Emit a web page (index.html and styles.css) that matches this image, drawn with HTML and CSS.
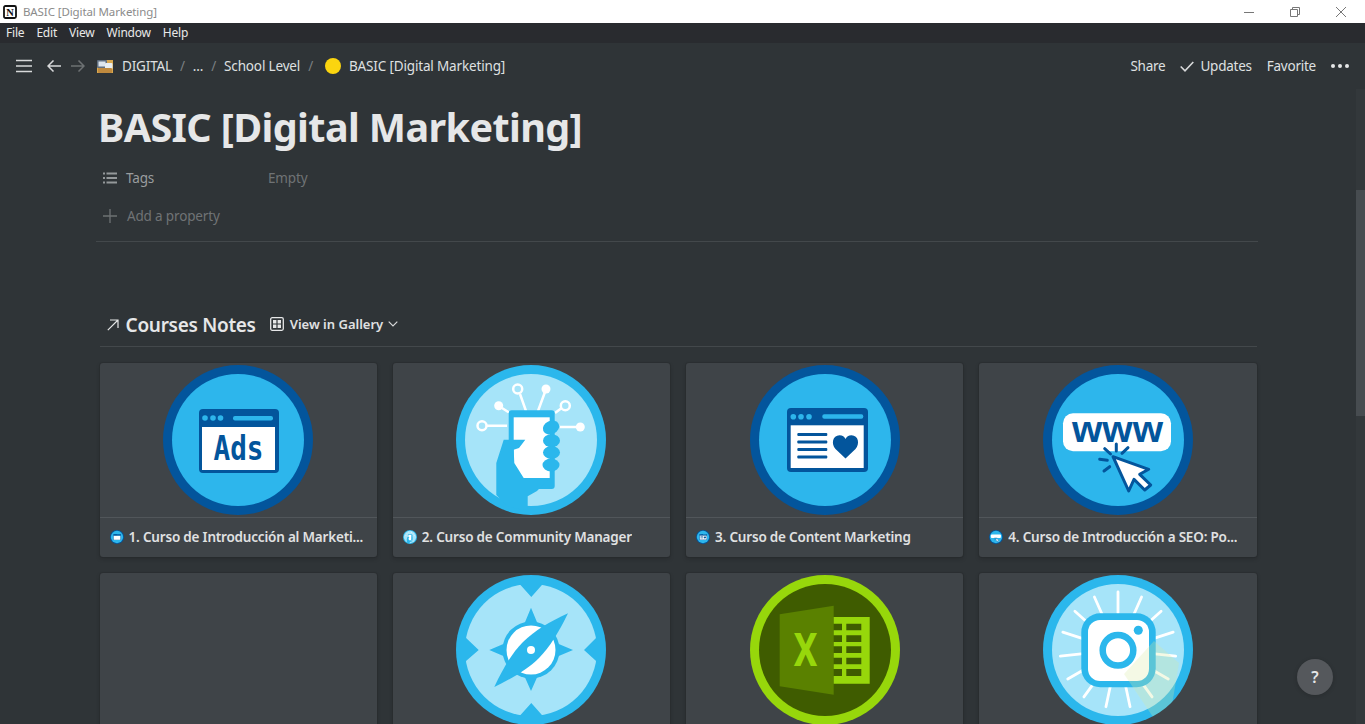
FILE: index.html
```html
<!DOCTYPE html>
<html lang="en">
<head>
<meta charset="utf-8">
<title>BASIC [Digital Marketing]</title>
<link rel="stylesheet" href="styles.css">
</head>
<body>
<svg class="defs" aria-hidden="true">
  <symbol id="ic-ads" viewBox="0 0 150 150">
    <circle cx="75" cy="75" r="75" fill="#03559c"/>
    <circle cx="75" cy="75" r="66" fill="#2db6ec"/>
    <rect x="36" y="44" width="80" height="64" rx="4" fill="#03559c"/>
    <rect x="39" y="62" width="73" height="43" fill="#fff"/>
    <circle cx="42" cy="53" r="2.8" fill="#2db6ec"/><circle cx="50" cy="53" r="2.8" fill="#2db6ec"/><circle cx="57.5" cy="53" r="2.8" fill="#2db6ec"/>
    <rect x="70" y="51" width="40" height="4.5" rx="2" fill="#2db6ec"/>
  </symbol>
  <symbol id="ic-community" viewBox="0 0 150 150">
    <defs><clipPath id="cc"><circle cx="75" cy="75" r="70"/></clipPath></defs>
    <circle cx="75" cy="75" r="75" fill="#2bb7ec"/>
    <circle cx="75" cy="75" r="66" fill="#a6e4f9"/>
    <g stroke="#fff" stroke-width="2.5" fill="none">
      <path d="M31 60.7H51M46 43L53 47.5M64 29L70 46M89 27L82 46M105 43.500L99 48M104 62H120"/>
      <circle cx="26" cy="60.700" r="4.500"/><circle cx="61.700" cy="24" r="4.500"/><circle cx="109.300" cy="40.700" r="4.500"/>
    </g>
    <g fill="#fff"><circle cx="42.700" cy="40.700" r="4.500"/><circle cx="90" cy="24" r="4.500"/><circle cx="124.300" cy="62" r="4.500"/></g>
    <rect x="52.700" y="45.300" width="46" height="78.700" rx="3" fill="#2bb7ec"/>
    <rect x="57.700" y="52.300" width="36" height="60.700" fill="#fff"/>
    <circle cx="75.300" cy="118.700" r="2.200" fill="#fff"/>
    <path clip-path="url(#cc)" d="M47.700 74.700H69.300L63 83L57.700 84.700L58.300 98L67.700 113H93.700L81 126L71.700 131.300V150H60L40.300 130V98Z" fill="#2bb7ec"/>
    <g fill="#2bb7ec"><ellipse cx="95" cy="62.500" rx="8.500" ry="6.500" transform="rotate(-25 95 62.500)"/><ellipse cx="95.500" cy="75.700" rx="8.500" ry="6.500"/><ellipse cx="95.500" cy="87.500" rx="8.500" ry="6.500"/><ellipse cx="95" cy="100" rx="8.500" ry="6.500"/></g>
  </symbol>
  <symbol id="ic-content" viewBox="0 0 150 150">
    <circle cx="75" cy="75" r="75" fill="#03559c"/>
    <circle cx="75" cy="75" r="66" fill="#2db6ec"/>
    <rect x="37" y="43" width="81" height="64" rx="4" fill="#03559c"/>
    <rect x="40.700" y="60.300" width="73" height="42.700" fill="#fff"/>
    <circle cx="43.300" cy="51.700" r="2.800" fill="#2db6ec"/><circle cx="51" cy="51.700" r="2.800" fill="#2db6ec"/><circle cx="59" cy="51.700" r="2.800" fill="#2db6ec"/>
    <rect x="72.300" y="49.300" width="41" height="4.500" rx="2" fill="#2db6ec"/>
    <g fill="#03559c"><rect x="47.300" y="68" width="30" height="3" rx="1"/><rect x="47.300" y="75.500" width="30" height="3" rx="1"/><rect x="47.300" y="83" width="30" height="3" rx="1"/><rect x="47.300" y="90.500" width="30" height="3" rx="1"/>
    <path d="M95.500 93.500L85.500 84C81 79 82.500 70.500 89.500 70.300C92.500 70.300 94.500 71.800 95.500 74C96.500 71.800 98.500 70.300 101.500 70.300C108.500 70.500 110 79 105.500 84Z"/></g>
  </symbol>
  <symbol id="ic-seo" viewBox="0 0 150 150">
    <circle cx="75" cy="75" r="75" fill="#03559c"/>
    <circle cx="75" cy="75" r="66" fill="#2db6ec"/>
    <rect x="20" y="48.300" width="108" height="38" rx="10" fill="#fff"/>
    <path d="M73.300 79V86M61.700 83.700L67.500 89M85 82.700L79 88.300M56.700 94.300L64.300 95.300M61 106L66.700 101.700" stroke="#03559c" stroke-width="3" stroke-linecap="round" fill="none"/>
    <path d="M70 91.700L85.700 126L91 114.300L101.700 125L107.700 120L96.700 109.300L105.700 104.300Z" fill="#fff" stroke="#03559c" stroke-width="3" stroke-linejoin="round"/>
  </symbol>
  <symbol id="ic-compass" viewBox="0 0 150 150">
    <circle cx="75" cy="75" r="75" fill="#2bb7ec"/>
    <circle cx="75" cy="75" r="66" fill="#a6e4f9"/>
    <path d="M62.700 8L75.300 22L87.700 8ZM8 61L22.700 75L8 87.700ZM142 61L128 75L142 87.700ZM62.700 142L75.300 128L87.700 142Z" fill="#2bb7ec"/>
    <path d="M75 32.700L83 52H67ZM117 75L98 83V67ZM75 116L67 98H83ZM33.300 75L52 67V83Z" fill="#2bb7ec"/>
    <circle cx="75" cy="75" r="28.500" fill="#2bb7ec"/>
    <circle cx="75" cy="75" r="24.500" fill="#fff"/>
    <path d="M112 38.300C95 46 78 56 67 67C56 78 46 95 38.300 112C55 104 72 94 83 83C94 72 104 55 112 38.300Z" fill="#2bb7ec"/>
    <circle cx="75" cy="75" r="4" fill="#fff"/>
  </symbol>
  <symbol id="ic-excel" viewBox="0 0 150 150">
    <circle cx="75" cy="75" r="75" fill="#97d70b"/>
    <circle cx="75" cy="75" r="66" fill="#3f5c00"/>
    <path d="M29.700 39.300L83.700 30.700V119.700L29.700 111.300Z" fill="#5a8100"/>
    <path d="M83.700 42H119.700V108.700H83.700ZM83.700 48.700V55.300H92V48.700ZM96.300 48.700V55.300H111.300V48.700ZM83.700 60.300V67H92V60.300ZM96.300 60.300V67H111.300V60.300ZM83.700 71.300V78H92V71.300ZM96.300 71.300V78H111.300V71.300ZM83.700 82.700V89.300H92V82.700ZM96.300 82.700V89.300H111.300V82.700ZM83.700 94V101H92V94ZM96.300 94V101H111.300V94Z" fill="#97d70b" fill-rule="evenodd"/>
  </symbol>
  <symbol id="ic-insta" viewBox="0 0 150 150">
    <defs><clipPath id="ci"><circle cx="75" cy="75" r="75"/></clipPath></defs>
    <circle cx="75" cy="75" r="75" fill="#2bb7ec"/>
    <circle cx="75" cy="75" r="66" fill="#a6e4f9"/>
    <g stroke="#fff" stroke-width="2.800" stroke-linecap="round">
      <path d="M75 17V38"/><path d="M75 17V38" transform="rotate(24 75 75)"/><path d="M75 17V38" transform="rotate(48 75 75)"/><path d="M75 17V38" transform="rotate(72 75 75)"/><path d="M75 17V38" transform="rotate(96 75 75)"/><path d="M75 17V38" transform="rotate(120 75 75)"/><path d="M75 17V38" transform="rotate(144 75 75)"/><path d="M75 17V38" transform="rotate(168 75 75)"/><path d="M75 17V38" transform="rotate(192 75 75)"/><path d="M75 17V38" transform="rotate(216 75 75)"/><path d="M75 17V38" transform="rotate(240 75 75)"/><path d="M75 17V38" transform="rotate(264 75 75)"/><path d="M75 17V38" transform="rotate(288 75 75)"/><path d="M75 17V38" transform="rotate(312 75 75)"/><path d="M75 17V38" transform="rotate(336 75 75)"/>
    </g>
    <rect x="38.300" y="38.300" width="74.400" height="74" rx="19" fill="#2bb7ec"/>
    <rect x="45" y="45" width="61" height="61" rx="12" fill="#fff"/>
    <circle cx="75" cy="75.300" r="15.300" fill="#fff" stroke="#2bb7ec" stroke-width="6.500"/>
    <circle cx="95.300" cy="55.300" r="4.500" fill="#2bb7ec"/>
    <path clip-path="url(#ci)" d="M81 99L111 66L136 88L128 136L112 145Z" fill="#d9e8a0" fill-opacity=".28"/>
  </symbol>
</svg>

<div class="app">
  <header class="titlebar">
    <svg class="app-logo" viewBox="0 0 14 14"><rect x="1" y="1" width="12" height="12" rx="1.500" fill="#fff" stroke="#111" stroke-width="1.800"/><text x="7" y="11" text-anchor="middle" font-family="Liberation Serif" font-weight="700" font-size="10.500" fill="#111">N</text></svg>
    <span class="titlebar-text">BASIC [Digital Marketing]</span>
    <div class="win-controls">
      <svg class="win-btn" viewBox="0 0 10 10"><path d="M0 5.500H10" stroke="#777" fill="none"/></svg>
      <svg class="win-btn" viewBox="0 0 10 10"><path d="M.5 2.500H7.500V9.500H.5ZM2.500 2.500V.5H9.500V7.500H7.500" stroke="#777" fill="none"/></svg>
      <svg class="win-btn" viewBox="0 0 10 10"><path d="M0 0L10 10M10 0L0 10" stroke="#777" fill="none"/></svg>
    </div>
  </header>

  <nav class="menubar">
    <span>File</span><span>Edit</span><span>View</span><span>Window</span><span>Help</span>
  </nav>

  <div class="topbar">
    <svg class="tb-menu" viewBox="0 0 16 14"><path d="M0 1.500H16M0 7H16M0 12.500H16" stroke="#d8d9da" stroke-width="1.700" fill="none"/></svg>
    <svg class="tb-arrow" viewBox="0 0 14 12"><path d="M14 6H1M6.500 .5L1 6L6.500 11.500" stroke="#d8d9da" stroke-width="1.500" fill="none"/></svg>
    <svg class="tb-arrow dim" viewBox="0 0 14 12"><path d="M0 6H13M7.500 .5L13 6L7.500 11.500" stroke="#6d7173" stroke-width="1.500" fill="none"/></svg>
    <svg class="crumb-img" viewBox="0 0 18 16"><path d="M1 4H7L8 2H17V15H1Z" fill="#d8a850"/><rect x="1" y="2" width="10" height="8" rx="1" fill="#5f6e80"/><rect x="2.500" y="3.500" width="7" height="5" fill="#dde6ee"/><rect x="9" y="5" width="7.500" height="6" rx="1" fill="#e8eef2"/><rect x="2" y="10" width="14" height="5" rx="1" fill="#c08a3e"/></svg>
    <span class="crumb first">DIGITAL</span>
    <span class="slash">/</span>
    <span class="crumb">...</span>
    <span class="slash">/</span>
    <span class="crumb">School Level</span>
    <span class="slash">/</span>
    <span class="dot"></span>
    <span class="crumb">BASIC [Digital Marketing]</span>
    <div class="tb-actions">
      <span>Share</span>
      <span class="tb-updates"><svg class="tb-check" viewBox="0 0 14 11"><path d="M.7 5.500L5 9.800L13.300 1" stroke="#d8d9da" stroke-width="1.600" fill="none"/></svg>Updates</span>
      <span>Favorite</span>
      <svg class="tb-more" viewBox="0 0 18 4"><circle cx="2" cy="2" r="2" fill="#e6e7e8"/><circle cx="9" cy="2" r="2" fill="#e6e7e8"/><circle cx="16" cy="2" r="2" fill="#e6e7e8"/></svg>
    </div>
  </div>

  <main class="main">
    <div class="page">
      <h1 class="page-title">BASIC [Digital Marketing]</h1>
      <div class="prop">
        <svg class="prop-icon" viewBox="0 0 14 12"><path d="M3.500 1.500H14M3.500 6H14M3.500 10.500H14M0 1.500H2M0 6H2M0 10.500H2" stroke="#94989a" stroke-width="1.800" fill="none"/></svg>
        <span class="prop-name">Tags</span>
        <span class="prop-value">Empty</span>
      </div>
      <div class="prop add">
        <svg class="prop-icon" viewBox="0 0 14 14"><path d="M7 0V14M0 7H14" stroke="#6d7173" stroke-width="1.300" fill="none"/></svg>
        <span class="add-label">Add a property</span>
      </div>
      <section class="section">
        <div class="section-head">
          <svg class="link-arrow" viewBox="0 0 12 12"><path d="M.8 11.200L11 1M3 1H11V9" stroke="#e6e7e8" stroke-width="1.200" fill="none"/></svg>
          <h2 class="section-title">Courses Notes</h2>
          <svg class="view-icon" viewBox="0 0 14 14"><rect x=".7" y=".7" width="12.600" height="12.600" rx="1.500" fill="none" stroke="#e6e7e8" stroke-width="1.300"/><path d="M3 3H6.400V6.400H3ZM7.600 3H11V6.400H7.600ZM3 7.600H6.400V11H3ZM7.600 7.600H11V11H7.600Z" fill="#e6e7e8"/></svg>
          <span class="view-name">View in Gallery</span>
          <svg class="chev" viewBox="0 0 10 6"><path d="M.7 .7L5 5L9.300 .7" stroke="#d8d9da" stroke-width="1.200" fill="none"/></svg>
        </div>
        <div class="gallery">
          <article class="card">
            <div class="cover"><svg class="cover-img" viewBox="0 0 150 150"><use href="#ic-ads" width="150" height="150"/><text x="75.500" y="95" text-anchor="middle" font-family="DejaVu Sans Mono" font-weight="700" font-size="33" textLength="50" lengthAdjust="spacingAndGlyphs" fill="#03559c">Ads</text></svg></div>
            <div class="caption"><svg class="cap-icon"><use href="#ic-ads"/></svg><span class="cap-text">1. Curso de Introducción al Marketi...</span></div>
          </article>
          <article class="card">
            <div class="cover"><svg class="cover-img"><use href="#ic-community"/></svg></div>
            <div class="caption"><svg class="cap-icon"><use href="#ic-community"/></svg><span class="cap-text">2. Curso de Community Manager</span></div>
          </article>
          <article class="card">
            <div class="cover"><svg class="cover-img"><use href="#ic-content"/></svg></div>
            <div class="caption"><svg class="cap-icon"><use href="#ic-content"/></svg><span class="cap-text">3. Curso de Content Marketing</span></div>
          </article>
          <article class="card">
            <div class="cover"><svg class="cover-img" viewBox="0 0 150 150"><use href="#ic-seo" width="150" height="150"/><text x="74.500" y="77" text-anchor="middle" font-family="Liberation Sans" font-weight="700" font-size="36" textLength="91" lengthAdjust="spacingAndGlyphs" fill="#03559c">www</text></svg></div>
            <div class="caption"><svg class="cap-icon"><use href="#ic-seo"/></svg><span class="cap-text">4. Curso de Introducción a SEO: Po...</span></div>
          </article>
          <article class="card">
            <div class="cover"></div>
          </article>
          <article class="card">
            <div class="cover"><svg class="cover-img"><use href="#ic-compass"/></svg></div>
          </article>
          <article class="card">
            <div class="cover"><svg class="cover-img" viewBox="0 0 150 150"><use href="#ic-excel" width="150" height="150"/><text x="55.500" y="91" text-anchor="middle" font-family="Roboto" font-weight="700" font-size="46" textLength="24" lengthAdjust="spacingAndGlyphs" fill="#97d70b">X</text></svg></div>
          </article>
          <article class="card">
            <div class="cover"><svg class="cover-img"><use href="#ic-insta"/></svg></div>
          </article>
        </div>
      </section>
    </div>
    <div class="scrollbar"><div class="scroll-thumb"></div></div>
    <button class="help" type="button">?</button>
  </main>
</div>
</body>
</html>
```

FILE: styles.css
```css
* { box-sizing: border-box; }
html, body { margin: 0; height: 100%; overflow: hidden; }
body { font-family: "Noto Sans", "Open Sans", sans-serif; background: #2f3437; color: #e6e7e8; }
.defs { position: absolute; width: 0; height: 0; }
.app { display: flex; flex-direction: column; height: 100vh; }

.titlebar { flex: 0 0 23px; background: #fff; display: flex; align-items: center; padding-left: 3px; }
.app-logo { width: 14px; height: 14px; }
.titlebar-text { margin-left: 6px; font-size: 11.500px; letter-spacing: -.1px; color: #8b8b8b; }
.win-controls { margin-left: auto; display: flex; gap: 36px; padding-right: 19px; }
.win-btn { width: 10px; height: 10px; display: block; }

.menubar { flex: 0 0 20px; background: #292b2f; display: flex; align-items: center; gap: 12px; padding: 0 0 1px 6px; font-size: 12px; letter-spacing: -.2px; color: #e8e8e8; }

.topbar { flex: 0 0 46px; display: flex; align-items: center; padding: 0 0 0 16px; font-size: 13.500px; letter-spacing: -.16px; color: #dfe0e1; }
.tb-menu { width: 16px; height: 14px; }
.tb-arrow { width: 14px; height: 12px; margin-left: 15px; }
.tb-arrow.dim { margin-left: 10px; }
.crumb-img { width: 18px; height: 16px; margin-left: 11px; }
.crumb.first { margin-left: 8px; }
.slash { margin: 0 8px; color: #7b7f82; }
.dot { width: 16px; height: 16px; border-radius: 50%; background: #fbd50f; margin: 0 8px 0 4px; }
.tb-actions { margin-left: auto; display: flex; align-items: center; gap: 15px; padding-right: 16px; letter-spacing: -.24px; }
.tb-updates { display: flex; align-items: center; gap: 6px; }
.tb-check { width: 14px; height: 11px; }
.tb-more { width: 18px; height: 4px; }

.main { flex: 1; min-height: 0; position: relative; overflow: hidden; }
.page { margin: 0 107px 0 96px; padding-top: 14px; }
.page-title { margin: 0 0 12px 2px; font-size: 39.500px; letter-spacing: -.6px; line-height: 48px; font-weight: 700; color: #e6e7e8; }
.prop { display: flex; align-items: center; height: 30px; margin-bottom: 8px; padding-left: 7px; font-size: 13.500px; letter-spacing: -.16px; }
.prop.add { margin-bottom: 10px; }
.prop-icon { width: 14px; height: 14px; flex: none; }
.prop-name { margin-left: 9px; width: 142px; color: #9a9d9f; }
.prop-value { color: #6f7375; }
.add-label { margin-left: 10px; color: #6f7375; }
.section { border-top: 1px solid #43484b; padding: 71px 1.400px 0 3.600px; }
.section-head { display: flex; align-items: center; height: 24px; padding-left: 7px; }
.link-arrow { width: 12px; height: 12px; flex: none; }
.section-title { margin: 0 0 0 7px; font-size: 19px; letter-spacing: -.3px; line-height: 24px; font-weight: 600; color: #e6e7e8; }
.view-icon { width: 14px; height: 14px; margin: 0 0 2px 14px; }
.view-name { margin: 0 0 2px 6px; font-size: 13px; font-weight: 600; color: #e0e1e2; }
.chev { width: 10px; height: 6px; margin: 0 0 2px 5px; }
.gallery { margin-top: 9px; border-top: 1px solid #43484b; padding-top: 16px; display: grid; grid-template-columns: repeat(4, 1fr); gap: 16px; }
.card { background: #3f4448; border-radius: 3px; height: 194px; box-shadow: 0 0 0 1px rgba(15,15,15,.1), 0 2px 4px rgba(15,15,15,.2); overflow: hidden; }
.cover { height: 155px; display: flex; align-items: center; justify-content: center; border-bottom: 1px solid #51565a; }
.cover-img { width: 150px; height: 150px; display: block; }
.caption { height: 39px; display: flex; align-items: center; padding: 0 0 2px 10px; }
.cap-icon { width: 14px; height: 14px; flex: none; }
.cap-text { margin-left: 5px; font-size: 13.500px; letter-spacing: -.2px; font-weight: 600; color: #e0e1e2; white-space: nowrap; overflow: hidden; }

.scrollbar { position: absolute; top: 0; right: 0; bottom: 0; width: 9px; background: #33383b; }
.scroll-thumb { position: absolute; top: 101px; left: 0; right: 0; height: 226px; background: #474c50; }
.help { position: absolute; right: 32px; bottom: 29px; width: 36px; height: 36px; border: 0; border-radius: 50%; background: #55585c; color: #e6e7e8; font: 600 16px "Noto Sans", sans-serif; padding: 0; box-shadow: 0 1px 4px rgba(15,15,15,.2); }
```
